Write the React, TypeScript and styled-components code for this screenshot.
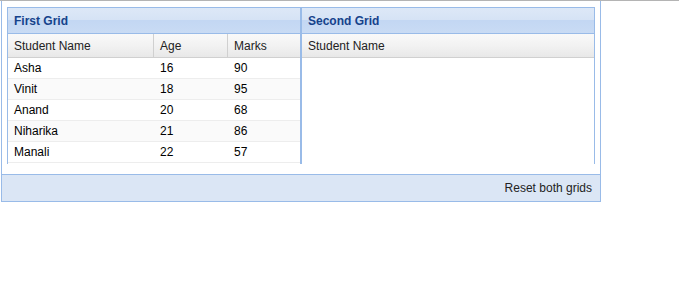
import styled, { createGlobalStyle } from 'styled-components';

const GlobalStyle = createGlobalStyle`
  html, body {
    margin: 0;
    padding: 0;
    background: #fff;
    font-family: 'Liberation Sans', Arial, sans-serif;
    font-size: 12px;
  }
`;

const Page = styled.div`
  border-top: 1px solid #b4b4b4;
  height: 307px;
`;

const Panel = styled.div`
  margin-left: 1px;
  width: 598px;
  border: 1px solid #99bbe8;
  border-top: none;
  background: #fff;
`;

const PanelBody = styled.div`
  display: grid;
  grid-template-columns: 294px 294px;
  padding: 6px 5px 10px;
`;

const Grid = styled.div`
  height: 156px;
  border: 1px solid #99bbe8;
  border-bottom: none;
  overflow: hidden;
  display: flex;
  flex-direction: column;
`;

const GridTitle = styled.div`
  height: 25px;
  flex: none;
  display: flex;
  align-items: center;
  padding-left: 6px;
  font-weight: bold;
  color: #15428b;
  border-bottom: 1px solid #99bbe8;
  background: linear-gradient(
    #dde8f7 0%,
    #d6e3f5 46%,
    #c3d7f3 50%,
    #c9dbf4 100%
  );
`;

const Row = styled.div<{ $cols: string }>`
  display: grid;
  grid-template-columns: ${({ $cols }) => $cols};
  flex: none;
`;

const HeaderRow = styled(Row)`
  height: 23px;
  border-bottom: 1px solid #d0d0d0;
  background: linear-gradient(#f9f9f9 0%, #f2f2f2 50%, #e8e8e8 100%);
  color: #222;
`;

const HeaderCell = styled.div<{ $last?: boolean }>`
  display: flex;
  align-items: center;
  padding-left: 6px;
  border-right: ${({ $last }) => ($last ? 'none' : '1px solid #d0d0d0')};
`;

const DataRow = styled(Row)<{ $alt: boolean }>`
  height: 20px;
  border-bottom: 1px solid #ededed;
  background: ${({ $alt }) => ($alt ? '#fafafa' : '#fff')};
  color: #000;
`;

const Cell = styled.div`
  display: flex;
  align-items: center;
  padding-left: 6px;
  white-space: nowrap;
`;

const Footer = styled.div`
  height: 26px;
  border-top: 1px solid #99bbe8;
  background: #dbe6f5;
  display: flex;
  align-items: center;
  justify-content: flex-end;
  padding-right: 8px;
`;

const ResetButton = styled.button`
  border: none;
  background: transparent;
  font: inherit;
  color: #222;
  padding: 0;
  cursor: pointer;
`;

const students = [
  { name: 'Asha', age: 16, marks: 90 },
  { name: 'Vinit', age: 18, marks: 95 },
  { name: 'Anand', age: 20, marks: 68 },
  { name: 'Niharika', age: 21, marks: 86 },
  { name: 'Manali', age: 22, marks: 57 },
];

const firstCols = '146px 74px 1fr';

export default function App() {
  return (
    <>
      <GlobalStyle />
      <Page>
        <Panel>
          <PanelBody>
            <Grid>
              <GridTitle>First Grid</GridTitle>
              <HeaderRow $cols={firstCols}>
                <HeaderCell>Student Name</HeaderCell>
                <HeaderCell>Age</HeaderCell>
                <HeaderCell $last>Marks</HeaderCell>
              </HeaderRow>
              {students.map((s, i) => (
                <DataRow key={s.name} $cols={firstCols} $alt={i % 2 === 1}>
                  <Cell>{s.name}</Cell>
                  <Cell>{s.age}</Cell>
                  <Cell>{s.marks}</Cell>
                </DataRow>
              ))}
            </Grid>
            <Grid>
              <GridTitle>Second Grid</GridTitle>
              <HeaderRow $cols="1fr">
                <HeaderCell $last>Student Name</HeaderCell>
              </HeaderRow>
            </Grid>
          </PanelBody>
          <Footer>
            <ResetButton>Reset both grids</ResetButton>
          </Footer>
        </Panel>
      </Page>
    </>
  );
}
